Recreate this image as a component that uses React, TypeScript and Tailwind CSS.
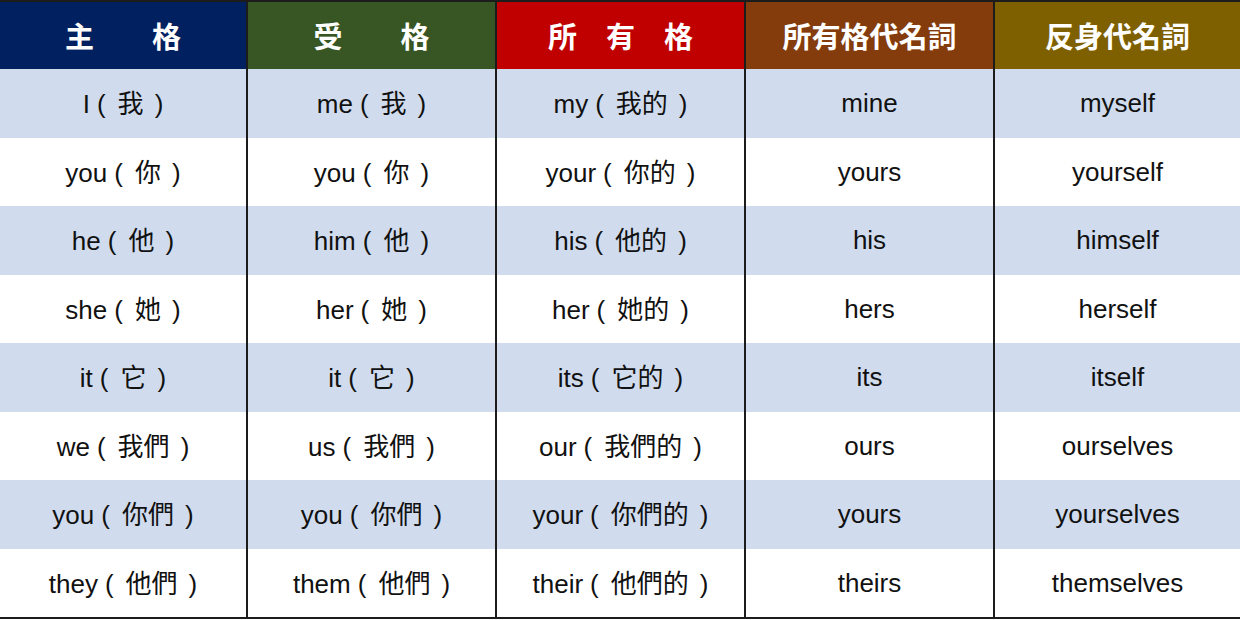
const headers = [
  { label: "主　　格", bg: "bg-[#002060]" },
  { label: "受　　格", bg: "bg-[#375623]" },
  { label: "所　有　格", bg: "bg-[#c00000]" },
  { label: "所有格代名詞", bg: "bg-[#843c0c]" },
  { label: "反身代名詞", bg: "bg-[#7f6000]" },
];

const rows = [
  ["I（我）", "me（我）", "my（我的）", "mine", "myself"],
  ["you（你）", "you（你）", "your（你的）", "yours", "yourself"],
  ["he（他）", "him（他）", "his（他的）", "his", "himself"],
  ["she（她）", "her（她）", "her（她的）", "hers", "herself"],
  ["it（它）", "it（它）", "its（它的）", "its", "itself"],
  ["we（我們）", "us（我們）", "our（我們的）", "ours", "ourselves"],
  ["you（你們）", "you（你們）", "your（你們的）", "yours", "yourselves"],
  ["they（他們）", "them（他們）", "their（他們的）", "theirs", "themselves"],
];

const cols = "grid grid-cols-[246px_249px_249px_249px_247px]";

function Word({ text }: { text: string }) {
  const m = text.match(/^(.*)（(.*)）$/);
  if (!m) return <>{text}</>;
  return (
    <>
      {m[1]}
      <span className="ml-[7px] mr-[12px]">(</span>
      <span style={{ fontFamily: '"Noto Sans CJK TC", sans-serif' }}>{m[2]}</span>
      <span className="ml-[11px]">)</span>
    </>
  );
}

export default function App() {
  return (
    <div
      className="w-[1240px] h-[620px] bg-white overflow-hidden"
      style={{ fontFamily: '"Liberation Sans", "Noto Sans CJK TC", sans-serif' }}
    >
      <div className="border-t-2 border-b-2 border-[#1c1c1c]">
        <div className={cols}>
          {headers.map((h, i) => (
            <div
              key={h.label}
              className={`${h.bg} h-[67px] flex items-center justify-center text-white text-[29px] font-bold ${
                i > 0 ? "border-l-2 border-[#1c1c1c]" : ""
              }`}
              style={{ fontFamily: '"Noto Sans CJK TC", sans-serif' }}
            >
              {h.label}
            </div>
          ))}
        </div>
        {rows.map((r, ri) => (
          <div key={ri} className={`${cols} ${ri % 2 === 0 ? "bg-[#d0dcee]" : "bg-white"}`}>
            {r.map((c, ci) => (
              <div
                key={ci}
                className={`h-[68.5px] flex items-center justify-center text-[26px] leading-none text-[#111] whitespace-pre ${
                  ci > 0 ? "border-l-2 border-[#1c1c1c]" : ""
                }`}
              >
                <span>
                  <Word text={c} />
                </span>
              </div>
            ))}
          </div>
        ))}
      </div>
    </div>
  );
}
